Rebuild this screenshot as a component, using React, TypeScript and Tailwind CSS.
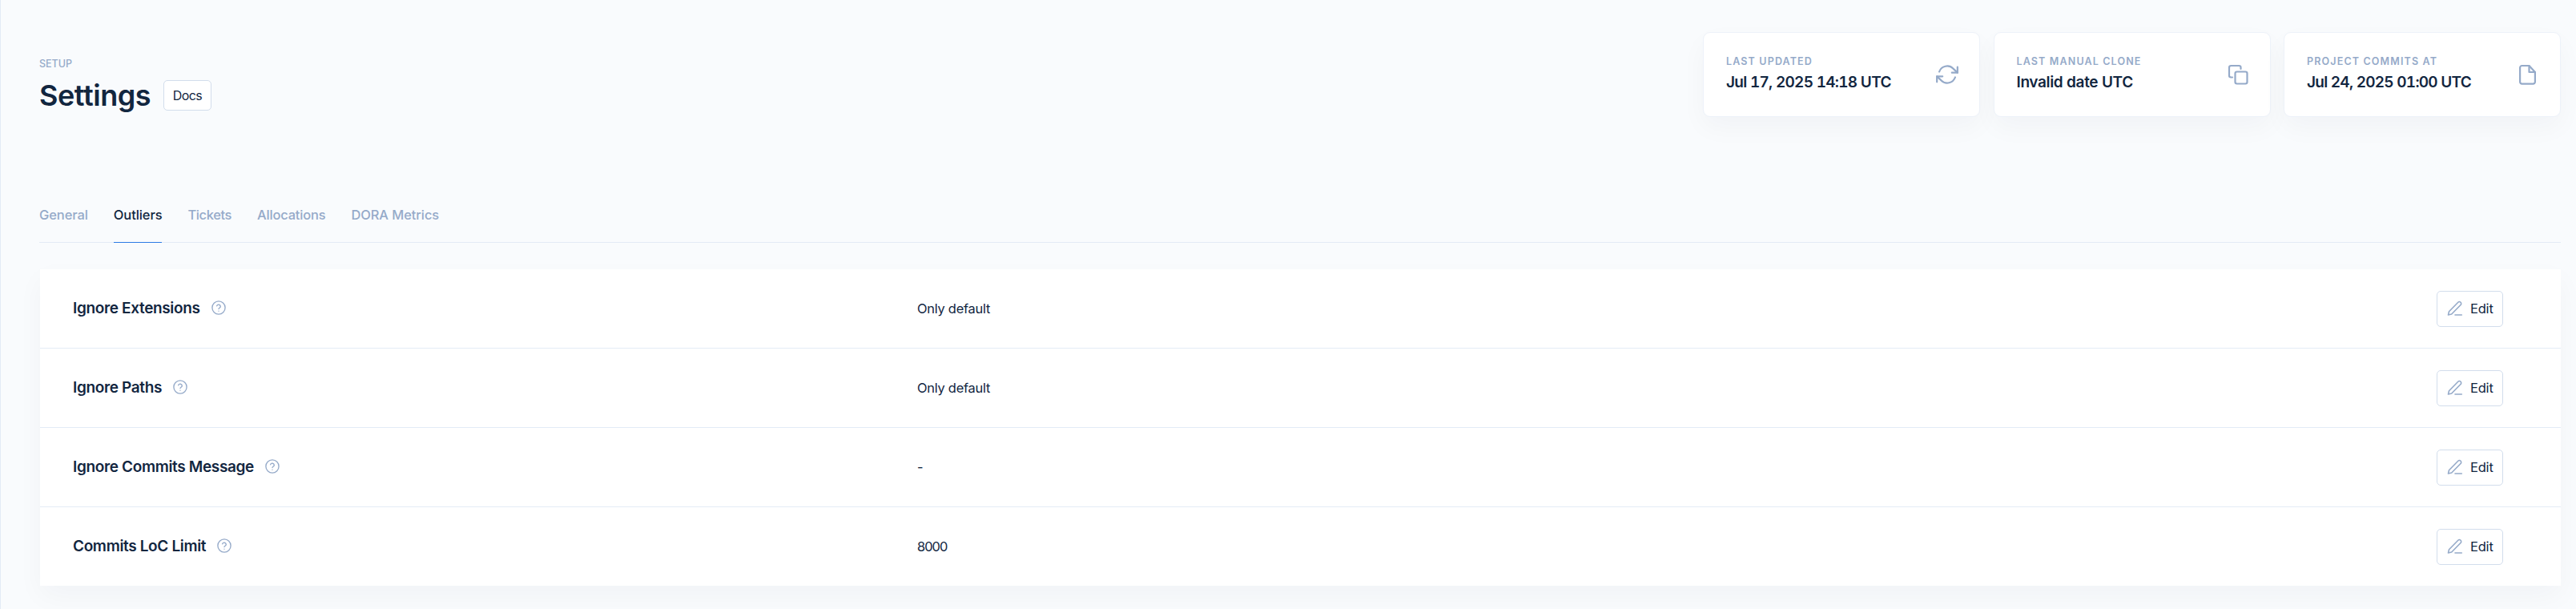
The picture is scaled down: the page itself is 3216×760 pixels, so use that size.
import React from "react";

const cardShadow = "shadow-[0_13px_32px_rgba(18,38,63,0.035)]";

function Refresh() {
  return (
    <svg className="size-[28px]" viewBox="0 0 24 24" fill="none" stroke="currentColor" strokeWidth="1.9" strokeLinecap="round" strokeLinejoin="round">
      <polyline points="23 4 23 10 17 10" />
      <polyline points="1 20 1 14 7 14" />
      <path d="M3.51 9a9 9 0 0 1 14.85-3.36L23 10M1 14l4.64 4.36A9 9 0 0 0 20.49 15" />
    </svg>
  );
}

function Copy() {
  return (
    <svg className="size-[28px]" viewBox="0 0 28 28" fill="none" stroke="currentColor" strokeWidth="2.2" strokeLinecap="round" strokeLinejoin="round">
      <rect x="10.5" y="10.5" width="15" height="15" rx="2.2" />
      <path d="M7 17.5H5.2A2.2 2.2 0 0 1 3 15.3V5.2A2.2 2.2 0 0 1 5.2 3h10.1a2.2 2.2 0 0 1 2.2 2.2V7" />
    </svg>
  );
}

function File() {
  return (
    <svg className="size-[28px]" viewBox="0 0 28 28" fill="none" stroke="currentColor" strokeWidth="2.2" strokeLinecap="round" strokeLinejoin="round">
      <path d="M15.500 3H6.500a2.400 2.400 0 0 0-2.400 2.400v17.800a2.400 2.400 0 0 0 2.400 2.400h14a2.400 2.400 0 0 0 2.400-2.400V11z" />
      <path d="M15.500 3v8h7.400" />
    </svg>
  );
}

function Pen() {
  return (
    <svg className="size-[20px]" viewBox="0 0 20 20" fill="none" stroke="currentColor" strokeWidth="1.6" strokeLinecap="round" strokeLinejoin="round">
      <path d="M1.500 18l1-4.200L13.800 2.300a2.200 2.200 0 0 1 3.200 3.200L5.700 17z" />
      <path d="M10 18h8.300" />
    </svg>
  );
}

function Help() {
  return (
    <svg className="size-[18px] -translate-y-px text-[#95aac9]" viewBox="0 0 24 24" fill="none" stroke="currentColor" strokeWidth="1.8" strokeLinecap="round" strokeLinejoin="round">
      <circle cx="12" cy="12" r="10.800" />
      <path d="M8.900 9a3.200 3.200 0 0 1 6.200 1c0 2-3.100 2.600-3.100 4" />
      <path d="M12 17.500h.01" />
    </svg>
  );
}

const stats = [
  { label: "LAST UPDATED", value: "Jul 17, 2025 14:18 UTC", icon: <Refresh />, tracking: "tracking-[-0.700px]" },
  { label: "LAST MANUAL CLONE", value: "Invalid date UTC", icon: <Copy />, tracking: "tracking-[-0.350px]" },
  { label: "PROJECT COMMITS AT", value: "Jul 24, 2025 01:00 UTC", icon: <File />, tracking: "tracking-[-0.730px]" },
];

const tabs = [
  { name: "General", tracking: "tracking-[-0.100px]" },
  { name: "Outliers", tracking: "tracking-[-0.100px]" },
  { name: "Tickets", tracking: "tracking-[-0.400px]" },
  { name: "Allocations", tracking: "tracking-[-0.200px]" },
  { name: "DORA Metrics", tracking: "tracking-[-0.100px]" },
];

const rows = [
  { name: "Ignore Extensions", value: "Only default" },
  { name: "Ignore Paths", value: "Only default" },
  { name: "Ignore Commits Message", value: "-" },
  { name: "Commits LoC Limit", value: "8000" },
];

export default function App() {
  return (
    <div className="h-[760px] w-[3216px] overflow-hidden border-l border-[#e3ebf6] bg-[#f9fbfd] pr-[19px] pl-[48px] font-['Inter',sans-serif] text-[#12263f]">
      <header className="flex h-[226px] items-start justify-between pt-[40px]">
        <div className="pt-[32px]">
          <div className="text-[12.500px] leading-[16px] font-medium text-[#95aac9]">SETUP</div>
          <div className="mt-[12px] flex h-[38px] items-center">
            <h1 className="w-[155px] text-[36px] leading-[38px] font-semibold tracking-[-0.450px]">Settings</h1>
            <button className="h-[38px] w-[60px] rounded-[5px] border border-[#d2ddec] bg-white text-[16px] tracking-[-0.600px]">Docs</button>
          </div>
        </div>
        <div className="flex gap-[16.500px]">
          {stats.map((s) => (
            <div key={s.label} className={`flex h-[106px] w-[346px] items-center justify-between rounded-[9px] border border-[#edf2f9] bg-white pr-[26px] pl-[28px] ${cardShadow}`}>
              <div className="mb-[3px]">
                <div className="text-[12.500px] leading-[16px] font-semibold tracking-[1.150px] text-[#95aac9]">{s.label}</div>
                <div className={`mt-[6px] text-[19px] leading-[24px] font-semibold tabular-nums ${s.tracking}`}>{s.value}</div>
              </div>
              <div className="text-[#95aac9]">{s.icon}</div>
            </div>
          ))}
        </div>
      </header>
      <nav className="flex h-[77px] gap-[32px] border-b border-[#e3ebf6] text-[16.500px] leading-[22px] font-medium">
        {tabs.map((t) => (
          <a key={t.name} className={`pt-[31px] ${t.tracking} ${t.name === "Outliers" ? "-mb-px border-b border-[#2c7be5]" : "text-[#95aac9]"}`}>
            {t.name}
          </a>
        ))}
      </nav>
      <main className={`mt-[33px] ml-px bg-white ${cardShadow}`}>
        {rows.map((r) => (
          <div key={r.name} className="flex h-[99px] items-center border-b border-[#e3ebf6] pr-[72px] pl-[41px] last:h-[98px] last:border-b-0">
            <div className="flex w-[1054px] items-center gap-[14px]">
              <span className="text-[19px] leading-[24px] font-semibold tracking-[-0.350px]">{r.name}</span>
              <Help />
            </div>
            <div className={`grow text-[16.500px] ${r.value === "8000" ? "tracking-[-1px]" : "tracking-[-0.300px]"}`}>{r.value}</div>
            <button className="flex h-[45px] w-[83px] items-center rounded-[5px] border border-[#d2ddec] bg-white pl-[12px] text-[16.500px]">
              <span className="text-[#95aac9]"><Pen /></span>
              <span className="ml-[9px] tracking-[-0.200px]">Edit</span>
            </button>
          </div>
        ))}
      </main>
    </div>
  );
}
